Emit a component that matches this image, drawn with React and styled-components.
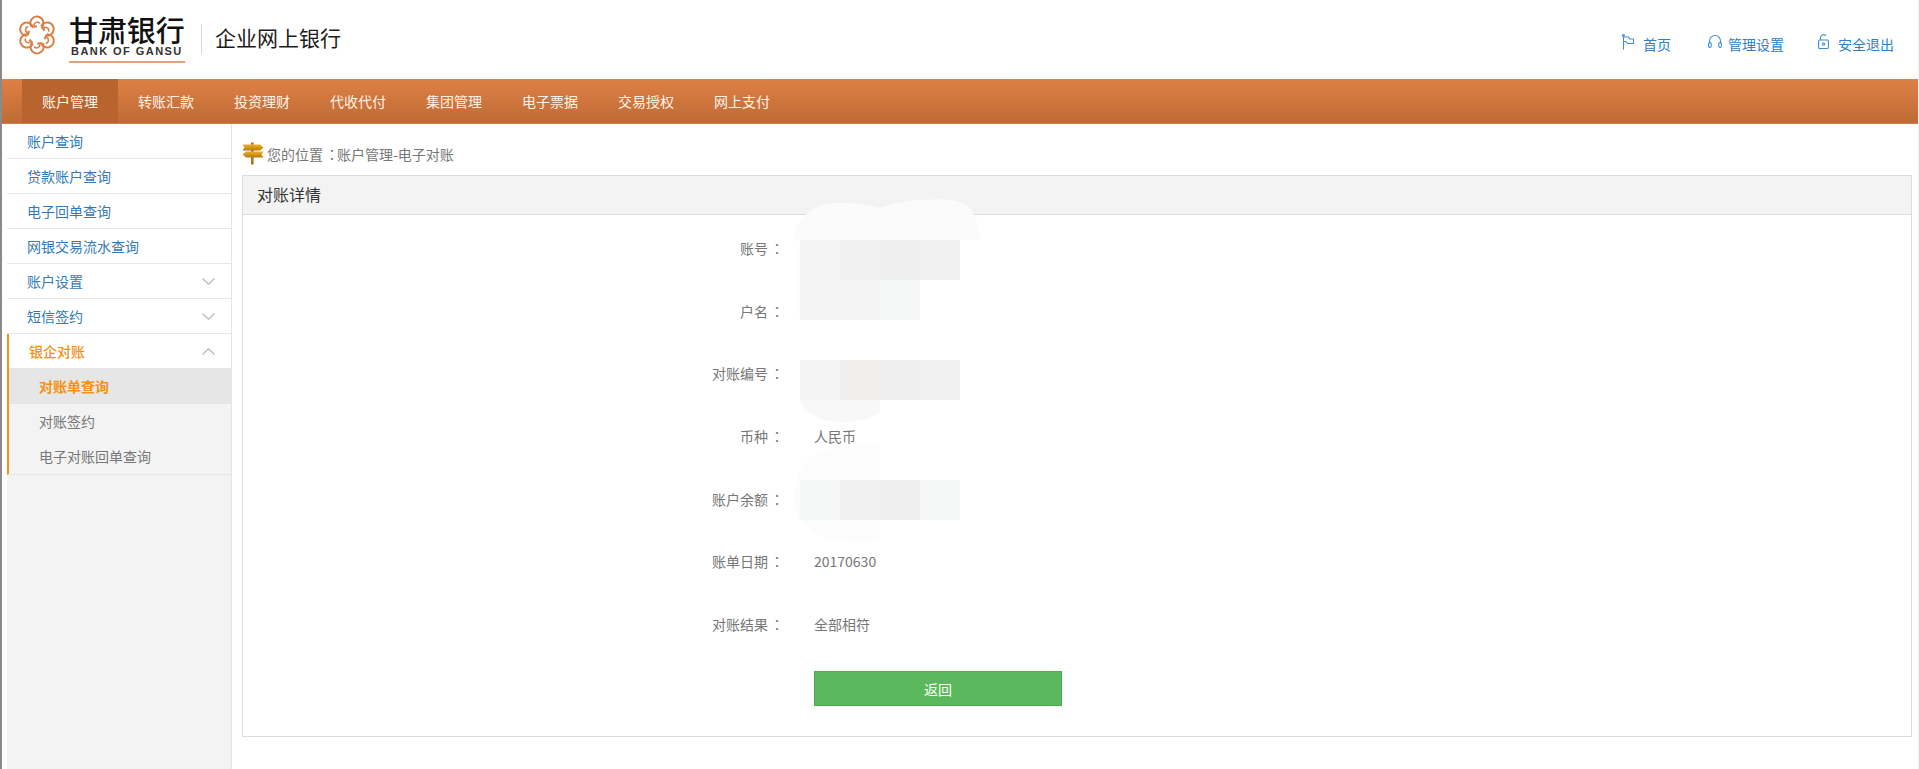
import React from "react";
import styled, { createGlobalStyle } from "styled-components";

const GlobalStyle = createGlobalStyle`
  html, body {
    margin: 0;
    padding: 0;
    background: #fff;
  }
  body {
    font-family: "Noto Sans CJK SC", "Liberation Sans", sans-serif;
    font-size: 14px;
    color: #777;
  }
  * {
    box-sizing: border-box;
  }
`;

const Page = styled.div`
  min-height: 769px;
  border-left: 2px solid #8a8a8a;
  border-right: 1px solid #f0f0f0;
  display: flex;
  flex-direction: column;
`;

const Header = styled.header`
  height: 79px;
  display: flex;
  align-items: flex-start;
  justify-content: space-between;
`;

const Brand = styled.div`
  display: flex;
  align-items: flex-start;
  padding: 14px 0 0 14px;
`;

const BrandText = styled.div`
  width: 116px;
  margin-left: 11px;
  display: flex;
  flex-direction: column;
`;

const BrandName = styled.div`
  height: 31px;
  font-size: 29px;
  line-height: 31px;
  font-weight: 500;
  letter-spacing: -0.1px;
  color: #111;
  white-space: nowrap;
`;

const BrandLatin = styled.div`
  height: 13px;
  font-family: "Liberation Sans", sans-serif;
  font-size: 11px;
  line-height: 13px;
  font-weight: 700;
  letter-spacing: 1.45px;
  color: #333;
  white-space: nowrap;
  padding-left: 2px;
`;

const BrandRule = styled.div`
  height: 2px;
  margin-top: 3px;
  background: #e0a47c;
`;

const Divider = styled.div`
  width: 1px;
  height: 30px;
  margin: 10px 13px 0 16px;
  background: #d8d8d8;
`;

const SiteTitle = styled.div`
  margin-top: 8px;
  font-size: 21px;
  line-height: 30px;
  color: #1c1c1c;
`;

const TopLinks = styled.div`
  display: flex;
  padding: 33px 24px 0 0;
`;

const TopLink = styled.a`
  display: flex;
  align-items: flex-start;
  margin-left: ${({ $gap }) => $gap}px;
  font-size: 14px;
  line-height: 22px;
  color: #2f80c6;
`;

const TopIcon = styled.svg`
  display: block;
  margin: 1px ${({ $gap }) => $gap}px 0 0;
  fill: none;
  stroke: #3f8fd2;
  stroke-width: 1.1;
`;

const NavBar = styled.nav`
  height: 45px;
  padding-left: 20px;
  display: flex;
  background: linear-gradient(to bottom, #de8045, #bf6b35);
  border-bottom: 1px solid #d47c45;
`;

const NavItem = styled.a`
  width: 96px;
  padding-left: 20px;
  font-size: 14px;
  line-height: 44px;
  color: #fdf3ea;
  background: ${({ $active }) => ($active ? "#b9632e" : "transparent")};
`;

const Main = styled.div`
  flex: 1;
  display: flex;
  padding-left: 5px;
`;

const Sidebar = styled.aside`
  width: 225px;
  flex: none;
  background: #f3f3f3;
  border-right: 1px solid #e4e4e4;
`;

const SideRow = styled.a`
  height: 35px;
  padding: 0 16px 0 20px;
  display: flex;
  align-items: center;
  justify-content: space-between;
  background: #fff;
  border-bottom: 1px solid #e6e6e6;
  line-height: 34px;
  color: #337ab7;
`;

const SideGroup = styled.div`
  border-left: 2px solid #f39214;
  border-bottom: 1px solid #e6e6e6;
`;

const GroupHead = styled.a`
  height: 34px;
  padding: 0 16px 0 20px;
  display: flex;
  align-items: center;
  justify-content: space-between;
  background: #fff;
  font-weight: 500;
  color: #f39214;
`;

const SubRow = styled.a`
  display: block;
  height: ${({ $active }) => ($active ? 36 : 35)}px;
  padding-left: 30px;
  line-height: ${({ $active }) => ($active ? 36 : 35)}px;
  background: ${({ $active }) => ($active ? "#e6e6e6" : "transparent")};
  font-weight: ${({ $active }) => ($active ? 700 : 400)};
  color: ${({ $active }) => ($active ? "#f39214" : "#777")};
`;

const Chevron = styled.svg`
  display: block;
  fill: none;
  stroke: #bdbdbd;
  stroke-width: 1.4;
`;

const Content = styled.main`
  flex: 1;
  min-width: 0;
  padding: 0 6px 0 10px;
`;

const Breadcrumb = styled.div`
  height: 51px;
  padding-top: 8px;
  display: flex;
  align-items: center;
  color: #777;
`;

// the traditional-Chinese cut centres the full-width colon, as the reference does
const Colon = styled.span`
  font-family: "Noto Sans CJK TC", sans-serif;
  padding-left: 2px;
  margin-right: -2px;
`;

const Signpost = styled.svg`
  display: block;
  margin-right: 3px;
`;

const Panel = styled.section`
  position: relative;
  height: 562px;
  border: 1px solid #dcdcdc;
`;

const PanelHead = styled.div`
  height: 39px;
  padding-left: 14px;
  background: #f3f3f3;
  border-bottom: 1px solid #dcdcdc;
  font-size: 16px;
  line-height: 36px;
  color: #333;
`;

const PanelBody = styled.div`
  padding-top: 2px;
`;

const FieldRow = styled.div`
  height: 62.6px;
  display: grid;
  grid-template-columns: 539px 1fr;
  column-gap: 32px;
  align-items: center;
`;

const FieldLabel = styled.div`
  text-align: right;
  color: #777;
`;

const FieldValue = styled.div`
  color: #777;
`;

const BackButton = styled.button`
  display: block;
  width: 248px;
  height: 35px;
  margin: 16px 0 0 571px;
  padding: 0;
  background: #5cb85c;
  border: 1px solid #4cae4c;
  font-family: inherit;
  font-size: 14px;
  color: #fff;
`;

// blurred-out account details sitting on top of the panel
const MosaicLayer = styled.svg`
  position: absolute;
  left: -1px;
  top: -1px;
  pointer-events: none;
`;

const navItems = ["账户管理", "转账汇款", "投资理财", "代收代付", "集团管理", "电子票据", "交易授权", "网上支付"];

const fields = [
  ["账号", ""],
  ["户名", ""],
  ["对账编号", ""],
  ["币种", "人民币"],
  ["账户余额", ""],
  ["账单日期", "20170630"],
  ["对账结果", "全部相符"],
];

const mosaicRows = [
  { y: 240, cells: ["#f3f3f3", "#f0f0f0", "#efefef", "#f1f1f1"] },
  { y: 280, cells: ["#f4f4f4", "#f3f3f3", "#f5f7f7"] },
  { y: 360, cells: ["#f5f4f4", "#f0efee", "#efefef", "#f0f0f0"] },
  { y: 480, cells: ["#f5f6f6", "#f1f1f1", "#efefef", "#f6f8f8"] },
];

const Logo = () => (
  <svg width="42" height="42" viewBox="-21 -21 42 42" fill="none" stroke="#d98048" strokeWidth="2">
    {[0, 60, 120, 180, 240, 300].map((angle) => (
      <g key={angle} transform={`rotate(${angle})`}>
        <path d="M-5.5 -8 A6.6 6.6 0 1 1 5 -7.6 L7.5 -4.5" />
        <path d="M-2.6 -9 A3 3 0 0 1 2.8 -11.5" strokeWidth="1.5" />
      </g>
    ))}
  </svg>
);

const DownChevron = ({ up }) => (
  <Chevron width="13" height="7" viewBox="0 0 13 7">
    <polyline points={up ? "0.5,6.5 6.5,0.8 12.5,6.5" : "0.5,0.5 6.5,6.2 12.5,0.5"} />
  </Chevron>
);

const App = () => {
  return (
    <Page>
      <GlobalStyle />
      <Header>
        <Brand>
          <Logo />
          <BrandText>
            <BrandName>甘肃银行</BrandName>
            <BrandLatin>BANK OF GANSU</BrandLatin>
            <BrandRule />
          </BrandText>
          <Divider />
          <SiteTitle>企业网上银行</SiteTitle>
        </Brand>
        <TopLinks>
          <TopLink $gap={0}>
            <TopIcon $gap={9} width="12" height="16" viewBox="0 0 12 16">
              <path d="M1.5 2V15.5M1.5 3H6.5L8 5H11.5V9.5H5.5L4 7.5H1.5" />
              <circle cx="1.5" cy="1.5" r="0.9" />
            </TopIcon>
            首页
          </TopLink>
          <TopLink $gap={37}>
            <TopIcon $gap={6} width="14" height="16" viewBox="0 0 14 16">
              <path d="M1.5 9.5V7A5.5 5.5 0 0 1 12.5 7V9.5" />
              <rect x="0.6" y="8.5" width="2.6" height="5" rx="1.2" />
              <rect x="10.8" y="8.5" width="2.6" height="5" rx="1.2" />
            </TopIcon>
            管理设置
          </TopLink>
          <TopLink $gap={34}>
            <TopIcon $gap={9} width="11" height="16" viewBox="0 0 11 16">
              <rect x="0.6" y="6" width="9.8" height="8.5" rx="1" />
              <path d="M2.5 6V3.5A3 3 0 0 1 8 2" />
              <circle cx="5.5" cy="10.2" r="1.1" />
            </TopIcon>
            安全退出
          </TopLink>
        </TopLinks>
      </Header>

      <NavBar>
        {navItems.map((item, i) => (
          <NavItem key={item} $active={i === 0}>
            {item}
          </NavItem>
        ))}
      </NavBar>

      <Main>
        <Sidebar>
          <SideRow>账户查询</SideRow>
          <SideRow>贷款账户查询</SideRow>
          <SideRow>电子回单查询</SideRow>
          <SideRow>网银交易流水查询</SideRow>
          <SideRow>
            账户设置
            <DownChevron />
          </SideRow>
          <SideRow>
            短信签约
            <DownChevron />
          </SideRow>
          <SideGroup>
            <GroupHead>
              银企对账
              <DownChevron up />
            </GroupHead>
            <SubRow $active>对账单查询</SubRow>
            <SubRow>对账签约</SubRow>
            <SubRow>电子对账回单查询</SubRow>
          </SideGroup>
        </Sidebar>

        <Content>
          <Breadcrumb>
            <Signpost width="22" height="23" viewBox="0 0 22 23">
              <defs>
                <linearGradient id="board" x1="0" y1="0" x2="0" y2="1">
                  <stop offset="0" stopColor="#eeb021" />
                  <stop offset="1" stopColor="#b67a0e" />
                </linearGradient>
              </defs>
              <rect x="9" y="0.5" width="2.6" height="22" fill="#a8741c" />
              <path d="M0.5 2.5H18L21.5 5.5L18 8.5H0.5L2.5 5.5Z" fill="url(#board)" />
              <path d="M4 9.5H21.5L19.5 12.5L21.5 15.5H4L0.5 12.5Z" fill="url(#board)" />
            </Signpost>
            <span>
              您的位置<Colon>：</Colon>账户管理-电子对账
            </span>
          </Breadcrumb>
          <Panel>
            <PanelHead>对账详情</PanelHead>
            <PanelBody>
              {fields.map(([label, value]) => (
                <FieldRow key={label}>
                  <FieldLabel>
                    {label}
                    <Colon>：</Colon>
                  </FieldLabel>
                  <FieldValue>{value}</FieldValue>
                </FieldRow>
              ))}
              <BackButton>返回</BackButton>
            </PanelBody>
            <MosaicLayer width="800" height="400" viewBox="242 175 800 400">
              <path d="M793 240C796 222 808 208 826 204C842 201 862 204 880 208C892 204 905 200 925 200C945 198 962 200 970 208C976 215 979 228 980 240Z" fill="#fbfbfb" />
              <path d="M800 240C795 260 793 300 800 320Z" fill="#fdfdfd" />
              <path d="M800 400C802 408 812 416 825 420C842 424 862 424 880 412V400Z" fill="#f8f8f8" />
              <path d="M880 445C850 445 820 448 808 460C796 472 793 490 795 505C797 520 808 532 825 537C845 542 865 541 880 540Z" fill="#fcfcfc" />
              {mosaicRows.map(({ y, cells }) =>
                cells.map((fill, i) => <rect key={`${y}-${i}`} x={800 + i * 40} y={y} width="40" height="40" fill={fill} />)
              )}
            </MosaicLayer>
          </Panel>
        </Content>
      </Main>
    </Page>
  );
};

export default App;
